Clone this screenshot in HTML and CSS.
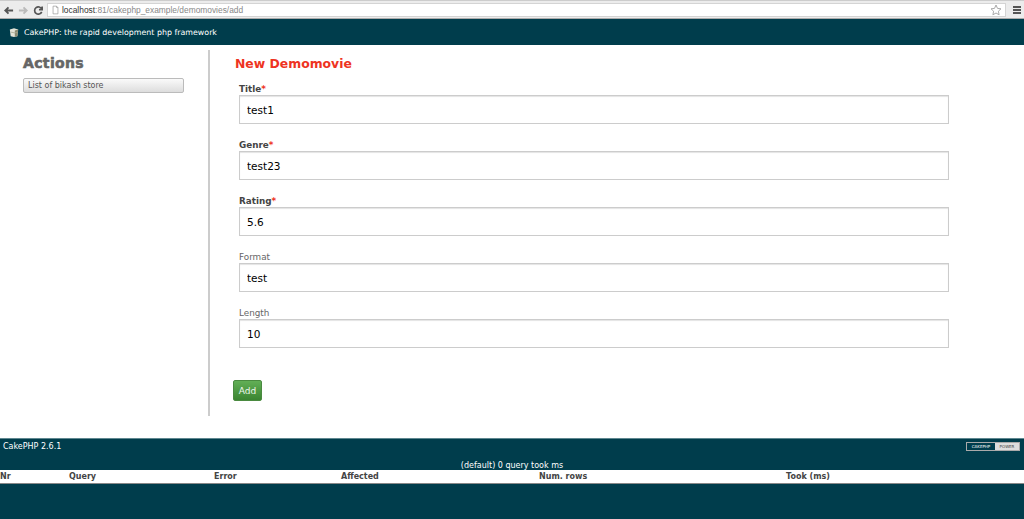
FILE: index.html
```html
<!DOCTYPE html>
<html lang="en">
<head>
    <meta charset="UTF-8">
    <title>Demomovies</title>
    <link rel="stylesheet" href="styles.css">
</head>
<body>
    <div class="browser-bar">
        <svg class="nav-icon" viewBox="0 0 12 12"><path d="M11 6H3M6 2.5L2.5 6L6 9.5" fill="none" stroke="#555" stroke-width="2"/></svg>
        <svg class="nav-icon" viewBox="0 0 12 12"><path d="M1 6H9M6 2.5L9.5 6L6 9.5" fill="none" stroke="#bbb" stroke-width="2"/></svg>
        <svg class="nav-icon" viewBox="0 0 12 12"><path d="M9.5 7.5A4 4 0 1 1 9.5 4.5M10 1.5V5H6.5" fill="none" stroke="#555" stroke-width="1.8"/></svg>
        <div class="address">
            <svg class="page-icon" viewBox="0 0 10 12"><path d="M1.5 .5H6.5L8.5 2.5V11.5H1.5ZM6.5 .5V2.5H8.5" fill="#fff" stroke="#999"/></svg>
            <span class="host">localhost</span><span class="url-rest">:81/cakephp_example/demomovies/add</span>
            <svg class="star" viewBox="0 0 12 12"><path d="M6 1L7.5 4.4L11 4.8L8.4 7.2L9.1 10.8L6 9L2.9 10.8L3.6 7.2L1 4.8L4.5 4.4Z" fill="#fff" stroke="#aaa"/></svg>
        </div>
        <div class="menu-icon"><span></span><span></span><span></span></div>
    </div>

    <div class="header">
        <svg class="cake-icon" viewBox="0 0 12 12"><path d="M1 2.5L6 1L11 2.5L10 10.5L6 11.5L2 10.5Z" fill="#e4e4d8"/><path d="M7 3.5V11.2L10 10.5L11 2.5Z" fill="#8a8a70"/><path d="M2 5.5L7 6.5L10.6 5.5" fill="none" stroke="#a8a890"/></svg>
        <span>CakePHP: the rapid development php framework</span>
    </div>

    <div class="content">
        <div class="actions">
            <h3>Actions</h3>
            <a class="action-btn">List of bikash store</a>
        </div>
        <div class="main">
            <h2>New Demomovie</h2>
            <form>
                <div class="field">
                    <label class="required">Title<em>*</em></label>
                    <input type="text" value="test1">
                </div>
                <div class="field">
                    <label class="required">Genre<em>*</em></label>
                    <input type="text" value="test23">
                </div>
                <div class="field">
                    <label class="required">Rating<em>*</em></label>
                    <input type="text" value="5.6">
                </div>
                <div class="field">
                    <label>Format</label>
                    <input type="text" value="test">
                </div>
                <div class="field">
                    <label>Length</label>
                    <input type="text" value="10">
                </div>
                <button type="button" class="add-btn">Add</button>
            </form>
        </div>
    </div>

    <div class="footer">
        <div class="footer-top">
            <span>CakePHP 2.6.1</span>
            <div class="power-badge"><span class="badge-dark">CAKEPHP</span><span class="badge-light">POWER</span></div>
        </div>
        <div class="caption">(default) 0 query took ms</div>
        <div class="sql-head">
            <span class="col-nr">Nr</span>
            <span class="col-query">Query</span>
            <span class="col-error">Error</span>
            <span class="col-affected">Affected</span>
            <span class="col-rows">Num. rows</span>
            <span class="col-took">Took (ms)</span>
        </div>
    </div>
</body>
</html>
```

FILE: styles.css
```css
html, body {
    height: 100%;
}
body {
    margin: 0;
    height: 519px;
    overflow: hidden;
    display: flex;
    flex-direction: column;
    background: #fff;
    font-family: "DejaVu Sans", Verdana, sans-serif;
}

/* browser toolbar */
.browser-bar {
    height: 19px;
    box-sizing: border-box;
    padding: 2px 3px 1px 3px;
    display: flex;
    align-items: center;
    gap: 4px;
    background: #ececec;
    border-top: 1px solid #ccc;
    border-bottom: 1px solid #aaa;
}
.nav-icon {
    width: 11px;
    height: 11px;
    flex: none;
}
.address {
    margin-left: -1px;
    flex: 1;
    height: 14px;
    display: flex;
    align-items: center;
    background: #fff;
    border: 1px solid #d4d4d4;
    box-sizing: border-box;
    padding: 0 3px 0 4px;
    font-family: "Liberation Sans", Arial, sans-serif;
    font-size: 8.4px;
}
.page-icon {
    width: 7px;
    height: 10px;
    margin-right: 3px;
}
.host {
    color: #333;
}
.url-rest {
    color: #888;
    flex: 1;
}
.star {
    width: 12px;
    height: 12px;
}
.menu-icon {
    width: 8px;
    margin-left: 3px;
    display: flex;
    flex-direction: column;
    gap: 1px;
}
.menu-icon span {
    height: 2px;
    background: #555;
}

/* cake header */
.header {
    height: 26px;
    padding-left: 9px;
    display: flex;
    align-items: center;
    gap: 5px;
    background: #003d4c;
    color: #fff;
    font-size: 7.9px;
    flex: none;
}
.cake-icon {
    width: 10px;
    height: 11px;
}

/* page body */
.content {
    flex: 1;
    display: flex;
    padding-top: 5px;
}
.actions {
    width: 161px;
    margin-left: 23px;
    padding-top: 6px;
}
.actions h3 {
    margin: 0 0 7px;
    font-size: 14px;
    line-height: 15px;
    font-weight: bold;
    letter-spacing: .35px;
    color: #666;
    -webkit-text-stroke: .6px #666;
}
.action-btn {
    display: block;
    height: 15px;
    line-height: 14px;
    box-sizing: border-box;
    padding-left: 4px;
    font-size: 8px;
    color: #555;
    background: linear-gradient(#fafafa, #ddd);
    border: 1px solid #bbb;
    border-radius: 2px;
}
.main {
    margin-left: 24px;
    height: 366px;
    border-left: 2px solid #ccc;
    padding: 6px 0 0 25px;
    width: 790px;
    box-sizing: border-box;
}
.main h2 {
    margin: 0 0 13px;
    font-size: 12.4px;
    line-height: 15px;
    color: #e32;
}
.field {
    margin: 0 0 16px 4px;
    width: 710px;
}
.field label {
    display: block;
    height: 10px;
    line-height: 10px;
    font-size: 8.8px;
    color: #666;
}
.field label.required {
    font-weight: bold;
    color: #444;
}
.field label em {
    color: #e32;
    font-style: normal;
}
.field input {
    display: block;
    width: 100%;
    height: 29px;
    margin-top: 1px;
    box-sizing: border-box;
    padding: 0 7px;
    border: 1px solid #ccc;
    box-shadow: inset 0 1px 1px #e4e4e4;
    font-family: "DejaVu Sans", Verdana, sans-serif;
    font-size: 10.5px;
    color: #000;
}
.add-btn {
    display: block;
    margin-top: 32px;
    margin-left: -2px;
    width: 29px;
    height: 21px;
    padding: 0;
    border: 1px solid #4a8a40;
    border-radius: 2px;
    background: linear-gradient(#62af56, #3a8431);
    color: #eef6ec;
    font-family: "DejaVu Sans", Verdana, sans-serif;
    font-size: 9px;
}

/* sql log */
.footer {
    flex: none;
    height: 81px;
    background: #003d4c;
    color: #fff;
    font-size: 8px;
    border-top: 1px solid #5f8790;
    box-sizing: border-box;
}
.footer-top {
    height: 22px;
    padding: 3px 4px 0 3px;
    display: flex;
    justify-content: space-between;
    align-items: flex-start;
    box-sizing: border-box;
}
.power-badge {
    margin-top: 0;
    display: flex;
    height: 7px;
    border: 1px solid #aaa;
    font-size: 4px;
    line-height: 7px;
}
.badge-dark {
    width: 28px;
    text-align: center;
}
.badge-light {
    width: 24px;
    text-align: center;
    background: #ddd;
    color: #444;
}
.caption {
    height: 9px;
    line-height: 9px;
    text-align: center;
}
.sql-head {
    height: 14px;
    box-sizing: border-box;
    background: #fff;
    border-bottom: 1px solid #888;
    color: #444;
    font-weight: bold;
    line-height: 14px;
    display: grid;
    grid-template-columns: 69px 145px 127px 198px 247px 1fr;
}
```
